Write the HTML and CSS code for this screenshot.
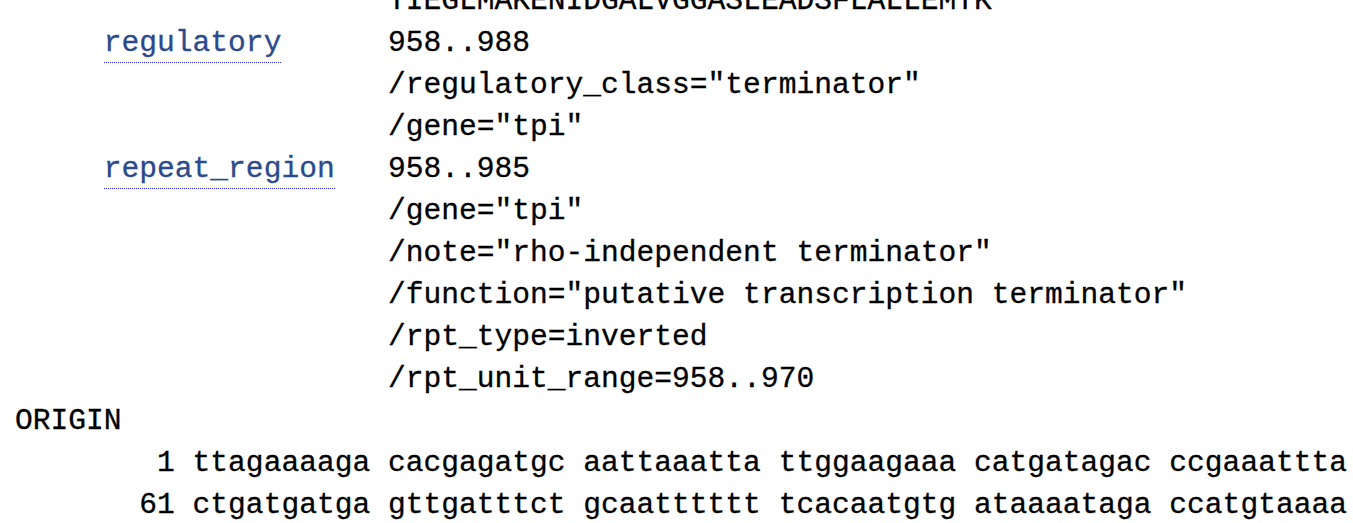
FILE: index.html
```html
<!DOCTYPE html>
<html>
<head>
<meta charset="utf-8">
<link rel="stylesheet" href="styles.css">
</head>
<body>
<pre class="genbank">                     TIEGLMAKENIDGALVGGASLEADSFLALLEMYK"
     <a class="feat" href="#">regulatory</a>      958..988
                     /regulatory_class="terminator"
                     /gene="tpi"
     <a class="feat" href="#">repeat_region</a>   958..985
                     /gene="tpi"
                     /note="rho-independent terminator"
                     /function="putative transcription terminator"
                     /rpt_type=inverted
                     /rpt_unit_range=958..970
ORIGIN
        1 ttagaaaaga cacgagatgc aattaaatta ttggaagaaa catgatagac ccgaaattta
       61 ctgatgatga gttgatttct gcaatttttt tcacaatgtg ataaaataga ccatgtaaaa
</pre>
</body>
</html>
```

FILE: styles.css
```css
html, body {
  margin: 0;
  padding: 0;
  background: #ffffff;
  overflow: hidden;
}

.genbank {
  margin: -20px 0 0 0;
  padding: 0 0 0 15px;
  font-family: "Liberation Mono", "DejaVu Sans Mono", monospace;
  font-size: 29.6px;
  line-height: 42px;
  color: #000000;
  white-space: pre;
  -webkit-text-stroke: 0.3px #000000;
}

.feat {
  color: #2b4a8c;
  -webkit-text-stroke: 0.3px #2b4a8c;
  text-decoration: none;
  border-bottom: 1px dotted #2a2aff;
  padding-bottom: 2px;
}
```
